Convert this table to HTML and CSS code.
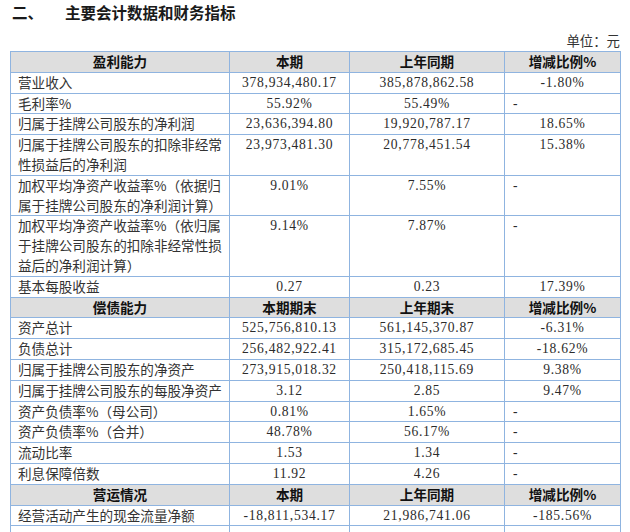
FILE: index.html
```html
<!DOCTYPE html>
<html lang="zh-CN">
<head>
<meta charset="utf-8">
<title>主要会计数据和财务指标</title>
<link rel="stylesheet" href="styles.css">
</head>
<body>
<div class="page">
  <h2 class="title"><span class="num">二、</span><span>主要会计数据和财务指标</span></h2>
  <div class="unit">单位：元</div>
  <table class="fin">
    <colgroup>
      <col class="c1"><col class="c2"><col class="c3"><col class="c4">
    </colgroup>
    <tbody>
      <tr class="head"><th>盈利能力</th><th>本期</th><th>上年同期</th><th>增减比例%</th></tr>
      <tr><td class="lbl">营业收入</td><td class="n">378,934,480.17</td><td class="n">385,878,862.58</td><td class="n">-1.80%</td></tr>
      <tr><td class="lbl">毛利率%</td><td class="n">55.92%</td><td class="n">55.49%</td><td class="dash">-</td></tr>
      <tr><td class="lbl">归属于挂牌公司股东的净利润</td><td class="n">23,636,394.80</td><td class="n">19,920,787.17</td><td class="n">18.65%</td></tr>
      <tr><td class="lbl">归属于挂牌公司股东的扣除非经常<br>性损益后的净利润</td><td class="n">23,973,481.30</td><td class="n">20,778,451.54</td><td class="n">15.38%</td></tr>
      <tr><td class="lbl">加权平均净资产收益率%（依据归<br>属于挂牌公司股东的净利润计算）</td><td class="n">9.01%</td><td class="n">7.55%</td><td class="dash">-</td></tr>
      <tr><td class="lbl">加权平均净资产收益率%（依归属<br>于挂牌公司股东的扣除非经常性损<br>益后的净利润计算）</td><td class="n">9.14%</td><td class="n">7.87%</td><td class="dash">-</td></tr>
      <tr><td class="lbl">基本每股收益</td><td class="n">0.27</td><td class="n">0.23</td><td class="n">17.39%</td></tr>
      <tr class="head"><th>偿债能力</th><th>本期期末</th><th>上年期末</th><th>增减比例%</th></tr>
      <tr><td class="lbl">资产总计</td><td class="n">525,756,810.13</td><td class="n">561,145,370.87</td><td class="n">-6.31%</td></tr>
      <tr><td class="lbl">负债总计</td><td class="n">256,482,922.41</td><td class="n">315,172,685.45</td><td class="n">-18.62%</td></tr>
      <tr><td class="lbl">归属于挂牌公司股东的净资产</td><td class="n">273,915,018.32</td><td class="n">250,418,115.69</td><td class="n">9.38%</td></tr>
      <tr><td class="lbl">归属于挂牌公司股东的每股净资产</td><td class="n">3.12</td><td class="n">2.85</td><td class="n">9.47%</td></tr>
      <tr><td class="lbl">资产负债率%（母公司）</td><td class="n">0.81%</td><td class="n">1.65%</td><td class="dash">-</td></tr>
      <tr><td class="lbl">资产负债率%（合并）</td><td class="n">48.78%</td><td class="n">56.17%</td><td class="dash">-</td></tr>
      <tr><td class="lbl">流动比率</td><td class="n">1.53</td><td class="n">1.34</td><td class="dash">-</td></tr>
      <tr><td class="lbl">利息保障倍数</td><td class="n">11.92</td><td class="n">4.26</td><td class="dash">-</td></tr>
      <tr class="head"><th>营运情况</th><th>本期</th><th>上年同期</th><th>增减比例%</th></tr>
      <tr><td class="lbl">经营活动产生的现金流量净额</td><td class="n">-18,811,534.17</td><td class="n">21,986,741.06</td><td class="n">-185.56%</td></tr>
      <tr><td class="lbl">&nbsp;</td><td class="n">&nbsp;</td><td class="n">&nbsp;</td><td class="n">&nbsp;</td></tr>
    </tbody>
  </table>
</div>
</body>
</html>
```

FILE: styles.css
```css
html, body {
  margin: 0;
  padding: 0;
  background: #ffffff;
  overflow: hidden;
}

.page {
  width: 610px;
  margin-left: 10px;
  font-family: "Liberation Serif", "Noto Sans CJK SC", serif;
  color: #2b2b2b;
}

.title {
  margin: 0;
  padding-left: 2px;
  height: 25px;
  line-height: 25px;
  font-family: "Noto Sans CJK SC", sans-serif;
  font-size: 15.5px;
  font-weight: 700;
  color: #1a1a1a;
  display: flex;
}

.title .num {
  width: 53px;
}

.unit {
  margin-top: 7px;
  height: 19px;
  line-height: 19px;
  text-align: right;
  font-size: 13.4px;
  color: #333;
}

.fin {
  width: 610px;
  table-layout: fixed;
  border-collapse: collapse;
  font-size: 13.6px;
  line-height: 19.8px;
}

.c1 { width: 219px; }
.c2 { width: 120px; }
.c3 { width: 155px; }
.c4 { width: 116px; }

.fin th,
.fin td {
  border: 1px solid #8fb4e0;
  padding: 0;
  vertical-align: top;
}

.fin .head th {
  background: #dedede;
  font-family: "Noto Sans CJK SC", sans-serif;
  font-weight: 700;
  color: #111;
  text-align: center;
  vertical-align: middle;
}

.fin .lbl {
  padding-left: 7px;
  white-space: nowrap;
  font-family: "Noto Sans CJK SC", sans-serif;
  font-weight: 400;
  color: #333;
}

.fin .n {
  text-align: center;
  letter-spacing: 0.7px;
}

.fin .dash {
  padding-left: 8px;
  text-align: left;
}
```
